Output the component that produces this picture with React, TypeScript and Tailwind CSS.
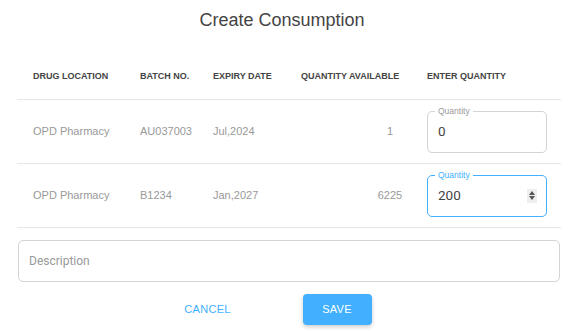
import React from 'react';

type Row = { location: string; batch: string; expiry: string; available: string; qty: string; focused?: boolean };

const rows: Row[] = [
  { location: 'OPD Pharmacy', batch: 'AU037003', expiry: 'Jul,2024', available: '1', qty: '0' },
  { location: 'OPD Pharmacy', batch: 'B1234', expiry: 'Jan,2027', available: '6225', qty: '200', focused: true },
];

const QuantityField: React.FC<{ value: string; focused?: boolean }> = ({ value, focused }) => (
  <div
    className={`relative flex h-[42px] w-[120px] items-center justify-between rounded-[5px] border px-[10px] ${
      focused ? 'border-[#42b0ff]' : 'border-[#d4d4d4]'
    }`}
  >
    <span
      className={`absolute top-[-6px] left-[7px] bg-white px-[3px] text-[8.5px] leading-[10px] ${
        focused ? 'text-[#42b0ff]' : 'text-[#999]'
      }`}
    >
      Quantity
    </span>
    <span className="text-[13.5px] text-[#444]" style={{ fontFamily: 'Roboto, sans-serif' }}>
      {value}
    </span>
    {focused && (
      <span className="mr-[-1px] flex h-[14px] w-[10px] flex-col items-center justify-center gap-[1px] bg-[#eee]">
        <svg width="6" height="4" viewBox="0 0 6 4"><path d="M3 0L6 4H0z" fill="#555" /></svg>
        <svg width="6" height="4" viewBox="0 0 6 4"><path d="M0 0h6L3 4z" fill="#555" /></svg>
      </span>
    )}
  </div>
);

const App: React.FC = () => {
  return (
    <div className="h-[331px] w-[578px] overflow-hidden bg-white" style={{ fontFamily: '"Liberation Sans", Arial, sans-serif' }}>
      <h1 className="pt-[8px] pr-[14px] text-center text-[18px] leading-[24px] text-[#444]">Create Consumption</h1>

      <div className="mx-[17px] mt-[23px]">
        <div className="flex h-[45px] items-center border-b border-[#e6e6e6] text-[9px] font-bold text-[#444]">
          <div className="w-[123px] pl-[16px]">DRUG LOCATION</div>
          <div className="w-[73px]">BATCH NO.</div>
          <div className="w-[88px]">EXPIRY DATE</div>
          <div className="w-[126px]">QUANTITY AVAILABLE</div>
          <div>ENTER QUANTITY</div>
        </div>
        {rows.map((r, i) => (
          <div key={i} className="flex h-[64px] items-center border-b border-[#e6e6e6] text-[11px] text-[#999]">
            <div className="w-[123px] pl-[16px]">{r.location}</div>
            <div className="w-[73px]">{r.batch}</div>
            <div className="w-[88px]">{r.expiry}</div>
            <div className="flex w-[126px] justify-end pr-[24px]">
              <span className="w-[26px] text-center">{r.available}</span>
            </div>
            <QuantityField value={r.qty} focused={r.focused} />
          </div>
        ))}
      </div>

      <div className="mx-[18px] mt-[12px] flex h-[42px] items-center rounded-[5px] border border-[#d4d4d4] px-[10px]">
        <span className="text-[12px] text-[#999]" style={{ fontFamily: 'Roboto, sans-serif' }}>Description</span>
      </div>

      <div className="mt-[12px] flex items-center justify-center pr-[46px]">
        <button className="mr-[48px] h-[31px] w-[94px] text-[11px] tracking-[0.3px] text-[#42b0ff]">CANCEL</button>
        <button className="h-[31px] w-[69px] rounded-[4px] bg-[#42b0ff] text-[11px] tracking-[0.3px] text-white shadow-[0_2px_4px_rgba(0,0,0,0.2)]">
          SAVE
        </button>
      </div>
    </div>
  );
};

export default App;
